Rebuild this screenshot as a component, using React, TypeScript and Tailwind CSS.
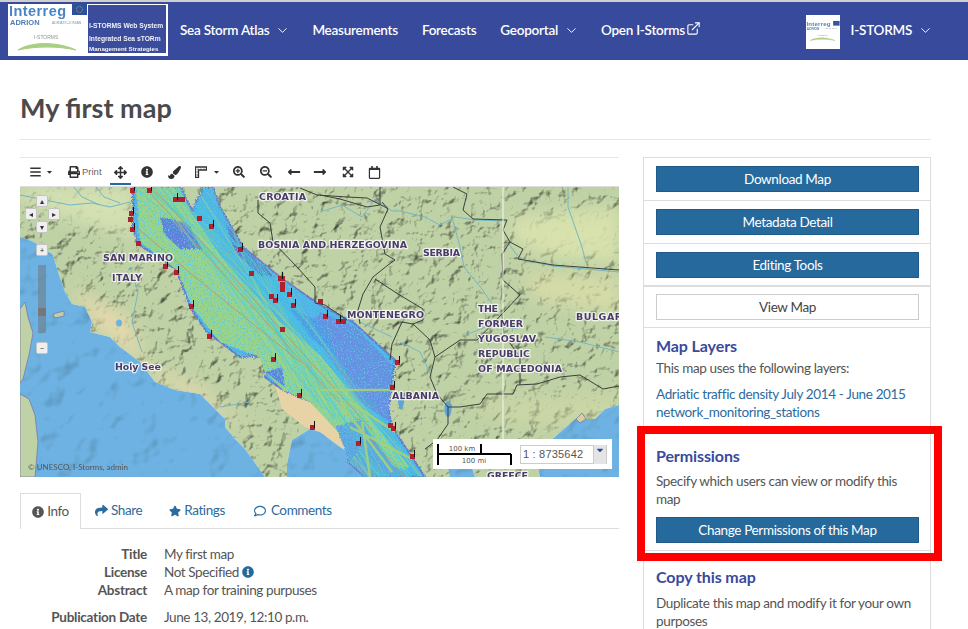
import { ChevronDown, ExternalLink } from 'lucide-react'
import {
  FaBars,
  FaCaretDown,
  FaExpandArrowsAlt,
  FaInfoCircle,
  FaLongArrowAltLeft,
  FaLongArrowAltRight,
  FaPaintBrush,
  FaPrint,
  FaRegCalendar,
  FaRegComment,
  FaSearchMinus,
  FaSearchPlus,
  FaShare,
  FaStar,
  FaArrowsAlt,
} from 'react-icons/fa'

const markers: [number, number, boolean?, number?][] = [
  [112, 3, true], [129, 3, true], [155, 12, true, 12], [179, 31], [191, 39, true], [111, 26, true],
  [110, 32], [112, 42, true], [118, 56], [145, 79, true], [156, 85, true], [220, 62, true], [231, 86],
  [260, 91, true, 7], [262, 97], [262, 102], [269, 107, true], [251, 109], [255, 113, true], [273, 118, true],
  [262, 142], [171, 119, true], [189, 149, true], [253, 172, true], [279, 208, true], [292, 240, true],
  [305, 129, true], [318, 134, true, 10], [377, 175, true], [372, 200, true], [370, 238], [373, 241, true],
  [338, 256, true], [392, 269, true], [300, 114],
]

const labels: [string, number, number, number][] = [
  ['CROATIA', 239, 13, 47],
  ['BOSNIA AND HERZEGOVINA', 238, 61, 149],
  ['SERBIA', 403, 69, 37],
  ['SAN MARINO', 83, 74, 70],
  ['ITALY', 92, 94, 30],
  ['Holy See', 95, 183, 46],
  ['MONTENEGRO', 327, 131, 77],
  ['THE', 458, 125, 20],
  ['FORMER', 458, 140, 45],
  ['YUGOSLAV', 458, 155, 58],
  ['REPUBLIC', 458, 170, 52],
  ['OF MACEDONIA', 458, 185, 84],
  ['BULGARIA', 556, 133, 58],
  ['ALBANIA', 372, 212, 47],
  ['GREECE', 467, 292, 41],
]

const borders = [
  'M280 1 L297 8 L327 10 L347 11 L367 21 M300 8 L320 12 L347 20 L360 18 L360 0',
  'M238 13 L238 26 L250 36 L253 55 L277 80 L295 100 L295 116 L305 118 L327 133',
  'M362 15 L368 22 L360 40 L365 67 L375 73 L368 78 L353 90 L343 107 L338 123 L340 137',
  'M355 92 L378 107 L403 122 L403 133 L393 137 L382 135 L372 157 L370 173',
  'M393 137 L410 153 L415 170 L410 190 L417 207 L428 220 L428 237 L417 253 L405 262',
  'M415 170 L440 153 L457 153 L482 127 L500 108 L483 93 L482 67 L490 55 L503 62 L498 72 L533 78 L599 83',
  'M490 55 L483 43 L487 33 L453 32 L443 23 L447 7 L433 0',
  'M428 220 L440 220 L460 217 L467 207 L493 207 L497 198 L517 197 L540 190 L560 188 L583 202 L599 199',
  'M482 127 L484 148 L500 170 L500 198',
]

const rivers = [
  'M0 8 L20 12 L50 18 L72 16 L90 20 L110 15',
  'M54 0 L62 10 L80 18 M76 0 L84 10 L100 16',
  'M300 25 L322 18 L342 30 L355 12 L372 24 L380 24 L405 30 L420 38 L435 30 L455 33 L486 34',
  'M432 30 L440 60 L444 80 L462 102 L478 126',
  'M488 56 L500 72 L533 79 L599 85 M548 0 L548 20 L562 60 L566 76',
  'M446 148 L470 138 L498 142 M525 150 L560 155 L599 165',
  'M110 80 L118 105 L112 135 L122 165',
  'M340 135 L372 150 M380 155 L400 165 L412 190 M200 220 L230 215 L245 200',
]

const adriatic =
  'M113 0 L113 43 L120 58 L157 83 L170 120 L187 145 L220 170 L250 168 L245 190 L263 203 L300 218 L337 253 L340 262 L328 275 L345 290 L405 290 L372 240 L368 220 L375 173 L333 135 L300 118 L260 90 L223 60 L200 20 L193 0 L184 0 L172 24 L160 0 Z'

const rand = (n: number) => {
  const a = Math.sin(n * 12.9898) * 43758.5453
  return a - Math.floor(a)
}

// shipping lanes fanning along the basin, NW to SE
const lanes = Array.from({ length: 70 }, (_, i) => {
  const x1 = 112 + rand(i + 1) * 95
  const x2 = 300 + rand(i + 200) * 105
  const mid = 220 + rand(i + 400) * 90
  return `M${x1.toFixed(1)} -2 Q${mid.toFixed(1)} 130 ${x2.toFixed(1)} 292`
})

function MapLayer() {
  return (
    <svg viewBox="0 0 599 290" className="block h-[290px] w-[599px] blur-[0.35px]">
      <defs>
        <filter id="relief" x="0" y="0" width="100%" height="100%" colorInterpolationFilters="sRGB">
          <feTurbulence type="fractalNoise" baseFrequency="0.07" numOctaves="4" seed="8" />
          <feGaussianBlur stdDeviation="0.6" result="n" />
          <feDiffuseLighting in="n" surfaceScale="4.2" diffuseConstant="1.3" lightingColor="#ffffff" result="l">
            <feDistantLight azimuth="225" elevation="60" />
          </feDiffuseLighting>
          <feBlend in="SourceGraphic" in2="l" mode="multiply" />
        </filter>
        <filter id="seaFloor" x="0" y="0" width="100%" height="100%" colorInterpolationFilters="sRGB">
          <feTurbulence type="fractalNoise" baseFrequency="0.03" numOctaves="3" seed="5" result="n" />
          <feDiffuseLighting in="n" surfaceScale="3" diffuseConstant="1.14" lightingColor="#ffffff" result="l">
            <feDistantLight azimuth="225" elevation="65" />
          </feDiffuseLighting>
          <feComposite in="l" in2="SourceGraphic" operator="in" result="c" />
          <feBlend in="SourceGraphic" in2="c" mode="multiply" />
        </filter>
        <filter id="grain" x="-5%" y="-5%" width="110%" height="110%" colorInterpolationFilters="sRGB">
          <feTurbulence type="fractalNoise" baseFrequency="0.6" numOctaves="2" seed="2" result="g" />
          <feDisplacementMap in="SourceGraphic" in2="g" scale="7" result="d" />
          <feTurbulence type="fractalNoise" baseFrequency="0.7" numOctaves="2" seed="4" />
          <feColorMatrix values="0 0 0 0 0.35  0 0 0 0 0.78  0 0 0 0 0.88  0 0 0 5 -2.7" />
          <feComposite in2="d" operator="in" result="s" />
          <feMerge>
            <feMergeNode in="d" />
            <feMergeNode in="s" />
          </feMerge>
        </filter>
        <filter id="soft">
          <feGaussianBlur stdDeviation="8" />
        </filter>
        <clipPath id="basin">
          <path d={adriatic} />
        </clipPath>
      </defs>

      <rect width="599" height="290" fill="#bfd2a6" filter="url(#relief)" />

      <g filter="url(#soft)">
        <path d="M0 0 L112 0 L118 50 L60 36 L0 14 Z" fill="#d6e2b4" opacity="0.9" />
        <path d="M50 100 L110 130 L130 190 L200 225 L240 250 L180 200 L120 175 L75 140 Z" fill="#e6d9ac" opacity="0.9" />
        <path d="M490 30 L599 20 L599 75 L530 70 L495 55 Z" fill="#dae3ae" opacity="0.9" />
        <path d="M500 85 L599 90 L599 125 L520 115 Z" fill="#e2e0a9" opacity="0.65" />
        <path d="M440 215 L520 210 L599 205 L599 240 L500 240 Z" fill="#d3d9a6" opacity="0.55" />
      </g>
      <path d="M255 198 L300 218 L337 253 L333 268 L320 260 L300 245 L285 240 L262 222 Z" fill="#e7d3a6" />

      <g filter="url(#seaFloor)" fill="#6db2e2">
        <path d="M0 50 L12 54 L22 60 L33 68 L38 85 L45 105 L52 117 L65 120 L72 135 L70 145 L90 150 L100 160 L120 175 L135 195 L155 203 L180 207 L195 222 L205 232 L205 240 L215 252 L225 262 L245 290 L0 290 Z" />
        <path d="M267 290 L267 277 L272 253 L290 242 L300 245 L320 260 L333 268 L345 290 Z" />
        <path d={adriatic} />
        <path d="M520 290 L515 265 L535 250 L555 232 L575 232 L585 222 L599 218 L599 290 Z" />
        <path d="M430 290 L425 268 L436 262 L450 275 L455 290 Z" />
      </g>

      <g fill="#bfd2a6" stroke="#7a78a8" strokeWidth="0.8">
        <path d="M0 122 L5 115 L8 130 L13 146 L9 168 L3 192 L0 196 Z" />
        <path d="M0 207 L9 212 L15 228 L18 255 L15 290 L0 290 Z" />
        <path d="M33 127 L44 124 L44 129 L35 131 Z" />
        <path d="M556 232 L562 226 L566 232 L560 236 Z" fill="#d8cfa0" />
      </g>
      <ellipse cx="99" cy="136" rx="3" ry="3.5" fill="#6db2e2" />
      <ellipse cx="381" cy="213" rx="3" ry="9" fill="#5ea5d5" />
      <ellipse cx="428" cy="222" rx="3.5" ry="8" fill="#5ea5d5" />

      <g filter="url(#grain)">
        <path d={adriatic} fill="#4fb4e8" stroke="#6a78c8" strokeWidth="2" />
        <path d="M116 0 L160 0 L170 24 L205 75 L260 135 L300 168 L345 225 L390 280 L345 290 L330 270 L318 245 L290 215 L263 203 L245 185 L240 170 L200 155 L172 120 L157 83 L120 55 Z" fill="#98d48e" />
        <path d="M140 30 L168 36 L182 62 L160 62 L145 48 Z" fill="#5f80dc" />
        <path d="M205 35 L222 58 L255 90 L240 88 L215 65 Z" fill="#5c7ed6" />
        <path d="M300 125 L335 140 L372 178 L368 222 L370 235 L340 215 L310 170 L290 140 Z" fill="#6690e2" />
        <path d="M268 120 L300 135 L320 175 L290 150 Z" fill="#4f9be8" />
        <path d="M245 185 L265 200 L262 180 Z" fill="#5f84dd" />
        <path d="M316 240 L340 232 L372 278 L392 290 L345 290 L328 270 Z" fill="#5ea4e0" />
      </g>

      <g fill="none" clipPath="url(#basin)">
        {lanes.map((d, i) => (
          <path
            key={d}
            d={d}
            stroke={i % 3 === 0 ? '#a9d880' : '#45cfdc'}
            strokeWidth={i % 7 === 0 ? 1.4 : 0.6}
            opacity="0.45"
          />
        ))}
        <path d="M125 0 L345 245 L385 290 M132 0 L352 243 M116 40 L175 90 L280 175" stroke="#b59479" strokeWidth="1" opacity="0.8" />
        <path d="M300 203 L372 203 M330 215 L375 245 M330 240 L392 272 M342 235 L350 290 M320 215 L372 285" stroke="#a4d07c" strokeWidth="2.5" opacity="0.9" />
      </g>

      <g fill="none" stroke="#74b6c4" strokeWidth="1">
        {rivers.map(d => (
          <path key={d} d={d} />
        ))}
      </g>
      <g fill="none" stroke="#3b3f3a" strokeWidth="1">
        {borders.map(d => (
          <path key={d} d={d} />
        ))}
      </g>

      <line x1="483" y1="0" x2="483" y2="252" stroke="#f4f6f0" strokeWidth="1" />

      {markers.map(([x, y, flag, w]) => (
        <g key={`${x}-${y}`}>
          <rect x={x - 2} y={y - 2} width={w ?? 5} height="5" fill="#b0202e" />
          {flag && <path d={`M${x + 2.5} ${y - 6} v7`} stroke="#111" strokeWidth="1" />}
        </g>
      ))}

      <g fontFamily="'DejaVu Sans', sans-serif" fontSize="9.5" fontWeight="700" fill="#4b3b6b">
        {labels.map(([text, x, y, w]) => (
          <text
            key={text}
            x={x}
            y={y}
            textLength={w}
            lengthAdjust="spacing"
            stroke="#ffffff"
            strokeOpacity="0.75"
            strokeWidth="2.5"
            strokeLinejoin="round"
            paintOrder="stroke"
          >
            {text}
          </text>
        ))}
      </g>
    </svg>
  )
}

function PanButton({ label, className }: { label: string; className: string }) {
  return (
    <div
      className={`absolute flex h-[12px] w-[12px] items-center justify-center rounded-[2px] border border-[#c4c4c4] bg-[#efefef] text-[8px] leading-none text-[#333] ${className}`}
    >
      {label}
    </div>
  )
}

function MapView() {
  return (
    <div className="relative h-[290px] w-[599px] overflow-hidden">
      <MapLayer />
      <PanButton label="▴" className="left-[16px] top-[8px]" />
      <PanButton label="◂" className="left-[5px] top-[21px]" />
      <PanButton label="▸" className="left-[28px] top-[21px]" />
      <PanButton label="▾" className="left-[16px] top-[34px]" />
      <PanButton label="+" className="left-[16px] top-[57px]" />
      <div className="absolute left-[18px] top-[78px] h-[68px] w-[8px] bg-[#6f8496] opacity-70" />
      <div className="absolute left-[18px] top-[121px] h-[8px] w-[8px] bg-[#777]" />
      <PanButton label="−" className="left-[16px] top-[155px]" />
      <div className="absolute bottom-[4px] left-[8px] text-[8px] leading-[12px] text-[#555]">
        © UNESCO, I-Storms, admin
      </div>
      <div className="absolute left-[413px] top-[252px] flex h-[30px] w-[179px] items-center bg-white">
        <svg viewBox="0 0 84 24" className="ml-[3px] h-[24px] w-[84px]">
          <path d="M2 2 V23 M2 12 H75 M45 2 V12 M75 12 V23" stroke="#000" strokeWidth="2" fill="none" />
          <text x="26" y="9" textAnchor="middle" fontSize="7" fontFamily="'DejaVu Sans', sans-serif" fill="#555">
            100 km
          </text>
          <text x="38" y="21" textAnchor="middle" fontSize="7" fontFamily="'DejaVu Sans', sans-serif" fill="#555">
            100 mi
          </text>
        </svg>
        <div className="flex h-[19px] w-[74px] items-center border border-[#cccccc] px-[2px] text-[11px] tracking-[0.2px] text-[#555] [font-family:'Liberation_Sans',sans-serif]">
          1 : 8735642
        </div>
        <div className="flex h-[19px] w-[13px] items-start justify-center border-r border-[#ccc] bg-[#e4e4e4] text-[10px] leading-[10px] text-[#2b4a9b]">
          <FaCaretDown />
        </div>
      </div>
    </div>
  )
}

function RulerIcon() {
  return (
    <svg viewBox="0 0 12 12" className="h-[12px] w-[12px]">
      <path d="M0.5 1 H11.5 V4 H3.5 V11.5 H0.5 Z" fill="none" stroke="#333" strokeWidth="1.3" />
      <path d="M3 2.5 V4 M6 2.5 V4 M9 2.5 V4 M1.5 6 H3 M1.5 9 H3" stroke="#333" strokeWidth="0.8" />
    </svg>
  )
}

function Toolbar() {
  const cell = 'flex h-full items-center justify-center text-[12px] text-[#333]'
  return (
    <div className="flex h-[30px] items-center border-y border-y-[#e6e6e6] border-b-[#dddddd] pl-[10px]">
      <div className={`${cell} w-[11px]`}>
        <FaBars className="text-[12px]" />
      </div>
      <div className={`${cell} ml-[5px] w-[7px]`}>
        <FaCaretDown className="text-[8px]" />
      </div>
      <div className="ml-[15px] flex items-center text-[#333]">
        <FaPrint className="text-[12px]" />
        <span className="ml-[2px] text-[9.5px] text-[#666] [font-family:'Liberation_Sans',sans-serif]">Print</span>
      </div>
      <div className={`${cell} relative ml-[8px] w-[21px]`}>
        <FaArrowsAlt className="text-[13px]" />
        <div className="absolute bottom-[1px] left-0 h-[2px] w-full bg-[#26699c]" />
      </div>
      <div className={`${cell} ml-[6px] w-[21px]`}>
        <FaInfoCircle />
      </div>
      <div className={`${cell} ml-[6px] w-[21px]`}>
        <FaPaintBrush className="text-[13px]" />
      </div>
      <div className={`${cell} ml-[6px] w-[21px]`}>
        <RulerIcon />
      </div>
      <div className={`${cell} ml-[1px] w-[7px]`}>
        <FaCaretDown className="text-[8px]" />
      </div>
      <div className={`${cell} ml-[11px] w-[16px]`}>
        <FaSearchPlus />
      </div>
      <div className={`${cell} ml-[11px] w-[16px]`}>
        <FaSearchMinus />
      </div>
      <div className={`${cell} ml-[12px] w-[16px]`}>
        <FaLongArrowAltLeft className="text-[14px]" />
      </div>
      <div className={`${cell} ml-[10px] w-[16px]`}>
        <FaLongArrowAltRight className="text-[14px]" />
      </div>
      <div className={`${cell} ml-[12px] w-[16px]`}>
        <FaExpandArrowsAlt />
      </div>
      <div className={`${cell} ml-[11px] w-[16px]`}>
        <FaRegCalendar className="text-[13px]" />
      </div>
    </div>
  )
}

function LogoMark() {
  return (
    <g fontFamily="'Liberation Sans', sans-serif">
      <text x="1" y="12" fontSize="14.5" fontWeight="700" fill="#4a86c5" textLength="57" lengthAdjust="spacing">
        Interreg
      </text>
      <rect x="64" y="0" width="15" height="11" fill="#2c4f9e" />
      <circle cx="71.5" cy="5.5" r="3" fill="none" stroke="#e2c64a" strokeWidth="0.7" strokeDasharray="0.8 0.8" />
      <text x="2" y="21" fontSize="7.5" fontWeight="700" fill="#4f7db5">
        ADRION
      </text>
      <text x="44" y="20" fontSize="3.5" fill="#7f93b5">
        ADRIATIC-IONIAN
      </text>
      <text x="26" y="35" fontSize="5" fill="#8a9a8a">
        I-STORMS
      </text>
      <path d="M10 46 C22 38 48 37 68 46 C50 42 28 42 10 46 Z" fill="#a8cf82" stroke="#a8cf82" />
    </g>
  )
}

function NavItem({ label, chevron }: { label: string; chevron?: boolean }) {
  return (
    <div className="flex items-center text-[13.5px] font-semibold tracking-[-0.25px] text-white">
      {label}
      {chevron && <ChevronDown size={15} strokeWidth={1.5} className="-mr-[2px] ml-[6px]" />}
    </div>
  )
}

function Navbar() {
  return (
    <nav className="flex h-[60px] items-center border-t-2 border-t-[#cfcfcf] bg-[#384a9b] pl-[8px] pr-[37px]">
      <svg viewBox="0 0 160 52" className="-mt-[3px] h-[52px] w-[160px] shrink-0 bg-white blur-[0.3px]">
        <LogoMark />
        <rect x="80" y="1" width="78" height="48" fill="#3c4c9c" />
        <g fontFamily="'Liberation Sans', sans-serif" fontSize="6.7" fontWeight="700" fill="#f1f1f6">
          <text x="81" y="24">I-STORMS Web System</text>
          <text x="81" y="37">Integrated Sea sTORm</text>
          <text x="81" y="47" fontSize="6.2">Management Strategies</text>
        </g>
      </svg>
      <div className="-mt-[2px] ml-[12px] flex items-center gap-[24px]">
        <NavItem label="Sea Storm Atlas" chevron />
        <NavItem label="Measurements" />
        <NavItem label="Forecasts" />
        <NavItem label="Geoportal" chevron />
        <div className="flex items-center text-[13.5px] font-semibold tracking-[-0.25px] text-white">
          Open I-Storms
          <ExternalLink size={15} strokeWidth={1.8} className="-mt-[3px] ml-[1px]" />
        </div>
      </div>
      <svg viewBox="0 0 80 52" className="ml-auto mt-[2px] h-[34px] w-[34px] bg-white blur-[0.3px]" preserveAspectRatio="xMidYMid meet">
        <LogoMark />
      </svg>
      <div className="-mt-[2px] ml-[11px]">
        <NavItem label="I-STORMS" chevron />
      </div>
    </nav>
  )
}

function Tabs() {
  const tab = 'flex items-center gap-[3px] text-[13.5px] tracking-[-0.4px] text-[#2c6b9e]'
  return (
    <div className="mt-[16px] flex h-[36px] items-stretch border-b border-[#dddddd]">
      <div className="-mb-px flex w-[61px] items-center justify-center gap-[3px] border border-b-0 border-[#dddddd] bg-white text-[13.5px] tracking-[-0.4px] text-[#555]">
        <FaInfoCircle className="text-[12px]" />
        Info
      </div>
      <div className={`${tab} ml-[14px]`}>
        <FaShare className="text-[13px]" />
        Share
      </div>
      <div className={`${tab} ml-[27px]`}>
        <FaStar className="text-[12px]" />
        Ratings
      </div>
      <div className={`${tab} ml-[29px] gap-[5px]`}>
        <FaRegComment className="text-[12px]" />
        Comments
      </div>
    </div>
  )
}

function InfoRow({ label, children, className }: { label: string; children: React.ReactNode; className?: string }) {
  return (
    <div className={`flex h-[18px] items-center text-[13.5px] tracking-[-0.4px] ${className ?? ''}`}>
      <div className="w-[127px] text-right font-bold tracking-[-0.25px] text-[#555]">{label}</div>
      <div className="ml-[17px] flex items-center text-[#555]">{children}</div>
    </div>
  )
}

function SideItem({ children, className }: { children: React.ReactNode; className?: string }) {
  return <div className={`border-b border-[#dddddd] pl-[12px] pr-[11px] ${className ?? ''}`}>{children}</div>
}

function PrimaryButton({ label }: { label: string }) {
  return (
    <div className="flex h-[26px] items-center justify-center border border-[#1f5a88] bg-[#26699c] text-white">
      {label}
    </div>
  )
}

function Sidebar() {
  const heading = 'text-[16px] font-bold leading-[20px] tracking-[-0.1px] text-[#394a9c]'
  return (
    <aside className="relative ml-[24px] h-[500px] w-[288px] border-x border-t border-[#dddddd] text-[13.5px] leading-[18px] tracking-[-0.35px] text-[#555]">
      <SideItem className="py-[8px]">
        <PrimaryButton label="Download Map" />
      </SideItem>
      <SideItem className="py-[8px]">
        <PrimaryButton label="Metadata Detail" />
      </SideItem>
      <SideItem className="border-b-2 pb-[7px] pt-[8px]">
        <PrimaryButton label="Editing Tools" />
      </SideItem>
      <SideItem className="py-[7px]">
        <div className="flex h-[26px] items-center justify-center border border-[#cccccc] bg-white text-[#444]">View Map</div>
      </SideItem>
      <SideItem className="h-[105px] pt-[8px]">
        <h3 className={heading}>Map Layers</h3>
        <p className="mt-[3px]">This map uses the following layers:</p>
        <p className="mt-[8px] text-[#2c6b9e]">Adriatic traffic density July 2014 - June 2015</p>
        <p className="text-[#2c6b9e]">network_monitoring_stations</p>
      </SideItem>
      <SideItem className="h-[118px] pt-[13px]">
        <h3 className={heading}>Permissions</h3>
        <p className="mt-[6px] pr-[6px]">Specify which users can view or modify this map</p>
        <div className="mt-[9px]">
          <PrimaryButton label="Change Permissions of this Map" />
        </div>
      </SideItem>
      <SideItem className="border-b-0 pt-[16px]">
        <h3 className={heading}>Copy this map</h3>
        <p className="mt-[7px] pr-[6px]">Duplicate this map and modify it for your own purposes</p>
      </SideItem>
      <div className="pointer-events-none absolute left-[-7px] top-[268px] h-[135px] w-[305px] border-[8px] border-[#ff0000]" />
    </aside>
  )
}

export default function App() {
  return (
    <div className="h-screen overflow-hidden bg-white text-[#555] [font-family:Lato,sans-serif]">
      <Navbar />
      <main className="px-[20px]">
        <div className="w-[911px] border-b border-[#e6e6e6] pb-[15px] pt-[32px]">
          <h1 className="text-[27px] font-bold leading-[32px] text-[#4a4a4a]">My first map</h1>
        </div>
        <div className="mt-[17px] flex">
          <section className="w-[599px]">
            <Toolbar />
            <MapView />
            <Tabs />
            <div className="mt-[16px]">
              <InfoRow label="Title">My first map</InfoRow>
              <InfoRow label="License">
                Not Specified
                <FaInfoCircle className="ml-[3px] text-[12px] text-[#26699c]" />
              </InfoRow>
              <InfoRow label="Abstract">A map for training purpuses</InfoRow>
              <InfoRow label="Publication Date" className="mt-[9px]">
                June 13, 2019, 12:10 p.m.
              </InfoRow>
            </div>
          </section>
          <Sidebar />
        </div>
      </main>
    </div>
  )
}
